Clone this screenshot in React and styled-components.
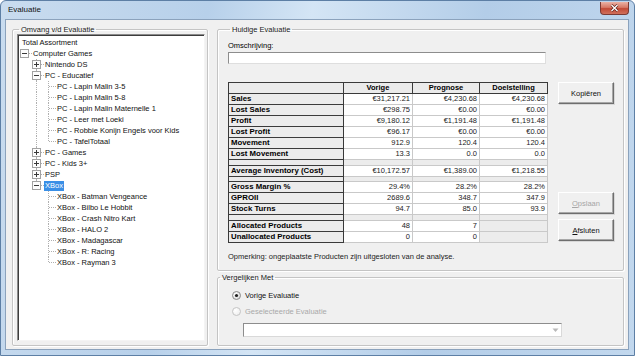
import React from "react";
import styled, { createGlobalStyle } from "styled-components";

const GlobalStyle = createGlobalStyle`
  html, body {
    margin: 0;
    padding: 0;
  }
  body {
    width: 635px;
    height: 356px;
    overflow: hidden;
    background: #ffffff;
    font-family: "Liberation Sans", Arial, sans-serif;
    font-size: 7.5px;
    color: #000;
  }
`;

const Window = styled.div`
  width: 635px;
  height: 356px;
  box-sizing: border-box;
  display: flex;
  flex-direction: column;
  padding: 0 5px 5px 4px;
  border: 1px solid #5d7fa5;
  border-radius: 6px 6px 0 0;
  background: linear-gradient(100deg, #c9dcef 0%, #b7d0ea 30%, #d4e5f5 45%, #b3cde8 70%, #c2d8ee 100%);
`;

const TitleBar = styled.div`
  height: 18px;
  display: flex;
  align-items: flex-start;
  justify-content: space-between;
  padding-left: 3px;
`;

const Title = styled.span`
  font-size: 8px;
  line-height: 18px;
  color: #111;
`;

const CloseButton = styled.div`
  width: 29px;
  height: 13px;
  margin-top: 1px;
  box-sizing: border-box;
  display: flex;
  align-items: center;
  justify-content: center;
  border: 1px solid #7b3a34;
  border-top: none;
  border-radius: 0 0 4px 4px;
  background: linear-gradient(180deg, #eab2a4 0%, #d77966 45%, #c24a36 55%, #d0705c 100%);
`;

const Panel = styled.div`
  flex: 1;
  display: flex;
  gap: 9px;
  padding: 5px 4px 3px 6px;
  background: #f0f0f0;
  border: 1px solid #8ba2bc;
`;

const Group = styled.fieldset`
  box-sizing: border-box;
  margin: 0;
  padding: ${(p) => p.$pad || "0"};
  min-width: 0;
  border: 1px solid #c4c4c4;
  border-radius: 2px;
  box-shadow: 1px 1px 0 #ffffff, inset 1px 1px 0 #ffffff;
  display: flex;
  flex-direction: column;
  ${(p) => (p.$width ? `width: ${p.$width}px; flex: none;` : "")}
  ${(p) => (p.$grow ? "flex: 1;" : "")}
`;

const Legend = styled.legend`
  padding: 0 2px;
  margin-left: 2px;
  font-size: 7.5px;
  line-height: 9px;
  color: #1a1a1a;
`;

const TreeBox = styled.div`
  flex: 1;
  background: #ffffff;
  border: 1px solid;
  border-color: #8a8a8a #f4f4f4 #f4f4f4 #8a8a8a;
  box-shadow: inset 1px 1px 0 #3c3c3c;
  padding-top: 2px;
`;

const TreeRow = styled.div`
  height: 11px;
  display: flex;
  align-items: center;
  padding-left: ${(p) => (p.$root ? 3 : 2)}px;
`;

const TreeLabel = styled.span`
  line-height: 10px;
  padding: 0 1px;
  white-space: nowrap;
  color: ${(p) => (p.$selected ? "#ffffff" : "#111")};
  background: ${(p) => (p.$selected ? "#3a8fe6" : "transparent")};
`;

const RightColumn = styled.div`
  flex: 1;
  display: flex;
  flex-direction: column;
  gap: 2px;
`;

const FieldLabel = styled.div`
  margin-top: 7px;
  line-height: 9px;
`;

const TextBox = styled.div`
  width: 318px;
  height: 12px;
  box-sizing: border-box;
  margin-top: 2px;
  background: #ffffff;
  border: 1px solid;
  border-color: #8d8d8d #dedede #dedede #8d8d8d;
`;

const TableRow = styled.div`
  display: flex;
  gap: 10px;
  margin-top: 18px;
`;

const Grid = styled.div`
  display: grid;
  grid-template-columns: 115px 69px 67px 68px;
  border-top: 1px solid #3a3a3a;
  border-left: 1px solid #3a3a3a;
`;

const HeadCell = styled.div`
  height: 11px;
  box-sizing: border-box;
  background: #ebebeb;
  border-right: 1px solid #3a3a3a;
  border-bottom: 1px solid #3a3a3a;
  font-weight: bold;
  text-align: center;
  line-height: 10px;
`;

const LabelCell = styled.div`
  height: ${(p) => p.$h || 11}px;
  box-sizing: border-box;
  background: #ebebeb;
  border-right: 1px solid #3a3a3a;
  border-bottom: 1px solid #3a3a3a;
  font-weight: bold;
  font-size: 7.8px;
  padding-left: 2px;
  line-height: 10px;
  white-space: nowrap;
`;

const ValueCell = styled.div`
  height: ${(p) => p.$h || 11}px;
  box-sizing: border-box;
  background: ${(p) => (p.$muted ? "#ececec" : "#ffffff")};
  border-right: 1px solid #c9c9c9;
  border-bottom: 1px solid #c9c9c9;
  text-align: right;
  padding-right: 2px;
  line-height: 10px;
  color: #222;
`;

const ButtonColumn = styled.div`
  display: flex;
  flex-direction: column;
  justify-content: space-between;
  padding-bottom: 2px;
`;

const ButtonStack = styled.div`
  display: flex;
  flex-direction: column;
  gap: 5px;
`;

const Button = styled.div`
  width: 56px;
  height: 22px;
  box-sizing: border-box;
  display: flex;
  align-items: center;
  justify-content: center;
  background: #f0f0f0;
  border: 1px solid;
  border-color: #ffffff #6e6e6e #6e6e6e #ffffff;
  box-shadow: inset -1px -1px 0 #a8a8a8, 1px 1px 0 #d8d8d8;
  color: ${(p) => (p.$disabled ? "#a6a6a6" : "#111")};
`;

const Remark = styled.div`
  margin-top: 9px;
  line-height: 9px;
  color: #1c1c1c;
`;

const RadioRow = styled.div`
  display: flex;
  align-items: center;
  gap: 4px;
  height: 10px;
  margin-left: 14px;
  margin-top: ${(p) => p.$mt}px;
  color: ${(p) => (p.$disabled ? "#a9a9a9" : "#111")};
`;

const Combo = styled.div`
  width: 319px;
  height: 14px;
  box-sizing: border-box;
  margin: 7px 0 0 25px;
  display: flex;
  justify-content: flex-end;
  align-items: center;
  padding-right: 2px;
  background: #ffffff;
  border: 1px solid;
  border-color: #8d8d8d #d9d9d9 #d9d9d9 #8d8d8d;
`;

const Glyph = styled.svg`
  display: block;
  flex: none;
`;

const treeData = {
  label: "Total Assortment",
  children: [
    {
      label: "Computer Games",
      children: [
        { label: "Nintendo DS", closed: true, children: [] },
        {
          label: "PC - Educatief",
          children: [
            { label: "PC - Lapin Malin 3-5" },
            { label: "PC - Lapin Malin 5-8" },
            { label: "PC - Lapin Malin Maternelle 1" },
            { label: "PC - Leer met Loeki" },
            { label: "PC - Robbie Konijn Engels voor Kids" },
            { label: "PC - TafelTotaal" },
          ],
        },
        { label: "PC - Games", closed: true, children: [] },
        { label: "PC - Kids 3+", closed: true, children: [] },
        { label: "PSP", closed: true, children: [] },
        {
          label: "XBox",
          selected: true,
          children: [
            { label: "XBox - Batman Vengeance" },
            { label: "XBox - Bilbo Le Hobbit" },
            { label: "XBox - Crash Nitro Kart" },
            { label: "XBox - HALO 2" },
            { label: "XBox - Madagascar" },
            { label: "XBox - R: Racing" },
            { label: "XBox - Rayman 3" },
          ],
        },
      ],
    },
  ],
};

function flatten(node, level, guides, last, out) {
  out.push({ ...node, level, guides, last });
  if (node.children && !node.closed) {
    const next = level >= 1 ? [...guides, !last] : guides;
    node.children.forEach((c, i) =>
      flatten(c, level + 1, next, i === node.children.length - 1, out)
    );
  }
  return out;
}

const rows = flatten(treeData, 0, [], true, []);

const dot = { stroke: "#b0b0b0", strokeDasharray: "1 1" };

const Guide = ({ on }) => (
  <Glyph width="12" height="11">
    {on && <line x1="4.5" y1="0" x2="4.5" y2="11" {...dot} />}
  </Glyph>
);

const Joint = ({ row }) => {
  const hasBox = !!row.children;
  const top = row.level > 1 ? 0 : 5.5;
  return (
    <Glyph width="12" height="11">
      <line x1="4.5" y1={top} x2="4.5" y2={row.last ? 5.5 : 11} {...dot} />
      <line x1="5" y1="5.5" x2="12" y2="5.5" {...dot} />
      {hasBox && (
        <>
          <rect x="0.5" y="1.5" width="8" height="8" fill="#fdfdfd" stroke="#a2a2a2" />
          <line x1="2" y1="5.5" x2="7" y2="5.5" stroke="#3a3a3a" />
          {row.closed && <line x1="4.5" y1="3" x2="4.5" y2="8" stroke="#3a3a3a" />}
        </>
      )}
    </Glyph>
  );
};

const tableRows = [
  ["Sales", "€31,217.21", "€4,230.68", "€4,230.68"],
  ["Lost Sales", "€298.75", "€0.00", "€0.00"],
  ["Profit", "€9,180.12", "€1,191.48", "€1,191.48"],
  ["Lost Profit", "€96.17", "€0.00", "€0.00"],
  ["Movement", "912.9", "120.4", "120.4"],
  ["Lost Movement", "13.3", "0.0", "0.0"],
  6,
  ["Average Inventory (Cost)", "€10,172.57", "€1,389.00", "€1,218.55"],
  5,
  ["Gross Margin %", "29.4%", "28.2%", "28.2%"],
  ["GPROII", "2689.6", "348.7", "347.9"],
  ["Stock Turns", "94.7", "85.0", "93.9"],
  6,
  ["Allocated Products", "48", "7", null],
  ["Unallocated Products", "0", "0", null],
];

const Radio = ({ checked, disabled }) => (
  <Glyph width="9" height="9">
    <defs>
      <radialGradient id={disabled ? "rgd" : "rg"} cx="0.35" cy="0.35" r="0.8">
        <stop offset="0" stopColor="#ffffff" />
        <stop offset="1" stopColor={disabled ? "#ececec" : "#d6d6d6"} />
      </radialGradient>
    </defs>
    <circle cx="4.5" cy="4.5" r="4" fill={`url(#${disabled ? "rgd" : "rg"})`} stroke={disabled ? "#c4c4c4" : "#8a8a8a"} />
    {checked && <circle cx="4.5" cy="4.5" r="1.6" fill="#1f1f1f" />}
  </Glyph>
);

export default function App() {
  return (
    <>
      <GlobalStyle />
      <Window>
        <TitleBar>
          <Title>Evaluatie</Title>
          <CloseButton>
            <Glyph width="9" height="8">
              <path d="M1.5 1 L7.5 7 M7.5 1 L1.5 7" stroke="#5a1f18" strokeWidth="2.6" />
              <path d="M1.5 1 L7.5 7 M7.5 1 L1.5 7" stroke="#ffffff" strokeWidth="1.4" />
            </Glyph>
          </CloseButton>
        </TitleBar>
        <Panel>
          <Group $width={196} $pad="0 2px 4px 4px">
            <Legend>Omvang v/d Evaluatie</Legend>
            <TreeBox>
              {rows.map((r, i) => (
                <TreeRow key={i} $root={r.level === 0}>
                  {r.level > 0 && r.guides.map((g, j) => <Guide key={j} on={g} />)}
                  {r.level > 0 && <Joint row={r} />}
                  <TreeLabel $selected={r.selected}>{r.label}</TreeLabel>
                </TreeRow>
              ))}
            </TreeBox>
          </Group>
          <RightColumn>
            <Group $pad="0 0 9px 10px">
              <Legend>Huidige Evaluatie</Legend>
              <FieldLabel>Omschrijving:</FieldLabel>
              <TextBox />
              <TableRow>
                <Grid>
                  <HeadCell />
                  <HeadCell>Vorige</HeadCell>
                  <HeadCell>Prognose</HeadCell>
                  <HeadCell>Doelstelling</HeadCell>
                  {tableRows.map((r, i) =>
                    typeof r === "number" ? (
                      <React.Fragment key={i}>
                        <LabelCell $h={r} />
                        <ValueCell $h={r} $muted />
                        <ValueCell $h={r} $muted />
                        <ValueCell $h={r} $muted />
                      </React.Fragment>
                    ) : (
                      <React.Fragment key={i}>
                        <LabelCell>{r[0]}</LabelCell>
                        <ValueCell>{r[1]}</ValueCell>
                        <ValueCell>{r[2]}</ValueCell>
                        <ValueCell $muted={r[3] === null}>{r[3]}</ValueCell>
                      </React.Fragment>
                    )
                  )}
                </Grid>
                <ButtonColumn>
                  <Button>Kopiëren</Button>
                  <ButtonStack>
                    <Button $disabled>
                      <u>O</u>pslaan
                    </Button>
                    <Button>
                      <u>A</u>fsluten
                    </Button>
                  </ButtonStack>
                </ButtonColumn>
              </TableRow>
              <Remark>Opmerking: ongeplaatste Producten zijn uitgesloten van de analyse.</Remark>
            </Group>
            <Group $grow $pad="0 0 6px 0">
              <Legend>Vergelijken Met</Legend>
              <RadioRow $mt={8}>
                <Radio checked />
                <span>Vorige Evaluatie</span>
              </RadioRow>
              <RadioRow $mt={6} $disabled>
                <Radio disabled />
                <span>Geselecteerde Evaluatie</span>
              </RadioRow>
              <Combo>
                <Glyph width="7" height="5">
                  <path d="M0.5 0.5 L6.5 0.5 L3.5 4 Z" fill="#b9b9b9" />
                </Glyph>
              </Combo>
            </Group>
          </RightColumn>
        </Panel>
      </Window>
    </>
  );
}
